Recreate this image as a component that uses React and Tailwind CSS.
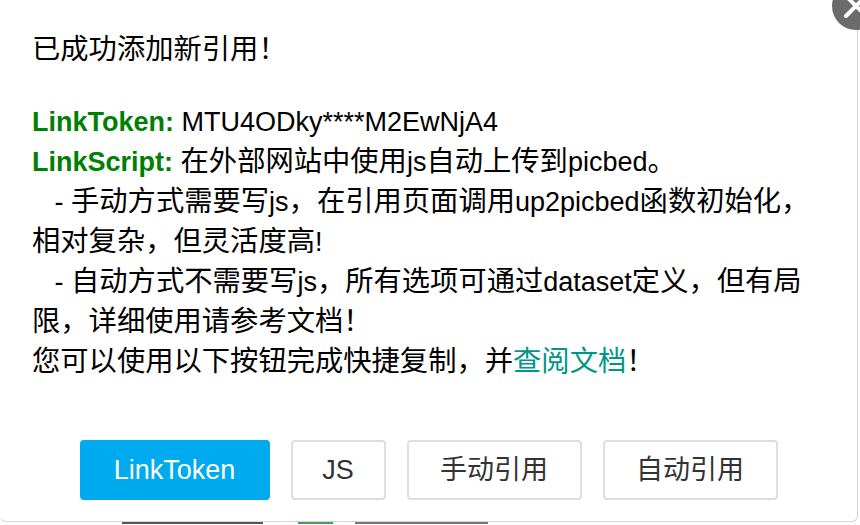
import React from "react";

const font = { fontFamily: '"Liberation Sans", "Noto Sans CJK SC", sans-serif' };

// CJK glyphs in the shot run a bit wider than the latin ones
function T({ children }) {
  const parts = String(children).split(/([\u3000-\u303f\u4e00-\u9fff\uff00-\uffef]+)/);
  return parts.map((p, i) =>
    i % 2 === 1 ? (
      <span key={i} className="text-[28.3px] leading-none">{p}</span>
    ) : (
      <React.Fragment key={i}>{p}</React.Fragment>
    )
  );
}

function CloseButton() {
  return (
    <div className="absolute left-[832px] top-[-18px] w-[48px] h-[48px] rounded-full bg-[#6b6b6b] flex items-center justify-center">
      <svg width="48" height="48" viewBox="0 0 48 48" className="block">
        <path d="M14 14 L34 34 M34 14 L14 34" stroke="#fff" strokeWidth="4" strokeLinecap="round" />
      </svg>
    </div>
  );
}

export default function App() {
  const buttons = [
    { label: "JS", w: "w-[95px]" },
    { label: "手动引用", w: "w-[175px]" },
    { label: "自动引用", w: "w-[175px]" },
  ];

  return (
    <div className="w-[860px] h-[525px] bg-white overflow-hidden relative" style={font}>
      {/* dialog */}
      <div className="relative w-[858px] h-[522px] bg-white rounded-b-[6px] border-b border-r border-[#d6d6d6] flex flex-col">
        <CloseButton />

        <div className="pl-[32px] pt-[30px] text-[27px] leading-[40px] h-[70px] text-black">
          <T>已成功添加新引用！</T>
        </div>

        <div className="pl-[32px] mt-[32px] text-[27px] leading-[40px] text-black whitespace-nowrap">
          <div className="h-[40px]">
            <span className="font-bold text-[#008000]">LinkToken:</span> MTU4ODky****M2EwNjA4
          </div>
          <div className="h-[40px]">
            <span className="font-bold text-[#008000]">LinkScript:</span> <T>在外部网站中使用js自动上传到picbed。</T>
          </div>
          <div className="h-[40px]">&nbsp;&nbsp;&nbsp;- <T>手动方式需要写js，在引用页面调用up2picbed函数初始化，</T></div>
          <div className="h-[40px]"><T>相对复杂，但灵活度高</T>!</div>
          <div className="h-[40px]">&nbsp;&nbsp;&nbsp;- <T>自动方式不需要写js，所有选项可通过dataset定义，但有局</T></div>
          <div className="h-[40px]"><T>限，详细使用请参考文档！</T></div>
          <div className="h-[40px]">
            <T>您可以使用以下按钮完成快捷复制，并</T>
            <span className="text-[#009688]"><T>查阅文档</T></span>
            <T>！</T>
          </div>
        </div>

        <div className="mt-[58px] flex justify-center gap-[21px]">
          <button className="w-[190px] h-[60px] rounded-[4px] bg-[#00aaee] text-white text-[27px]">
            LinkToken
          </button>
          {buttons.map((b) => (
            <button
              key={b.label}
              className={`${b.w} h-[60px] rounded-[4px] border-2 border-[#dedede] bg-white text-[#333] text-[27px]`}
            >
              {b.label}
            </button>
          ))}
        </div>
      </div>

      {/* page underneath peeking out */}
      <div className="flex items-start h-[3px]">
        <div className="ml-[122px] w-[141px] h-[2px] bg-[#555]" />
        <div className="ml-[35px] w-[35px] h-[2px] bg-[#4a9a5a]" />
        <div className="ml-[22px] w-[133px] h-[2px] bg-[#777]" />
      </div>
    </div>
  );
}
